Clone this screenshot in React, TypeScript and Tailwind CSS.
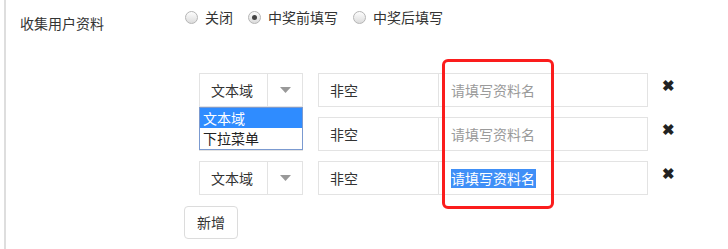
import React from 'react';

const font = { fontFamily: '"Noto Sans CJK SC", "Noto Sans", sans-serif' };

function Radio({ label, checked }: { label: string; checked?: boolean }) {
  return (
    <label className="flex items-center gap-[7px] mr-[15px]">
      <span className="w-[13px] h-[13px] rounded-full border border-[#b5b5b5] bg-gradient-to-b from-[#fdfdfd] to-[#dcdcdc] flex items-center justify-center">
        {checked && <span className="w-[5px] h-[5px] rounded-full bg-[#444]" />}
      </span>
      <span className="text-[14px] text-[#333]">{label}</span>
    </label>
  );
}

function FieldRow({ selected, covered }: { selected?: boolean; covered?: boolean }) {
  return (
    <div className="flex items-start h-[34px]">
      {/* select */}
      <div className="w-[104px] h-[34px] border border-[#e3e3e3] flex">
        <div className="w-[68px] h-full border-r border-[#e3e3e3] flex items-center pl-[11px] text-[14px] text-[#333]">
          {covered ? null : '文本域'}
        </div>
        <div className="flex-1 flex items-center justify-center">
          <svg width="11" height="6" viewBox="0 0 11 6">
            <path d="M0 0 L11 0 L5.5 6 Z" fill="#999" />
          </svg>
        </div>
      </div>
      {/* input group */}
      <div className="ml-[15px] w-[330px] h-[34px] border border-[#e3e3e3] flex">
        <div className="w-[120px] h-full border-r border-[#e3e3e3] flex items-center pl-[11px] text-[14px] text-[#333]">
          非空
        </div>
        <div className="flex-1 flex items-center pl-[12px] text-[14px]">
          {selected ? (
            <span className="bg-[#3f8ff7] text-white leading-[19px] pr-[1px]">请填写资料名</span>
          ) : (
            <span className="text-[#9a9a9a]">请填写资料名</span>
          )}
        </div>
      </div>
      <div className="ml-[14px] mt-[4px] text-[15px] font-bold text-[#222] leading-[15px]">✖</div>
    </div>
  );
}

export default function App() {
  return (
    <div className="w-[728px] h-[249px] bg-white pl-[4px] overflow-hidden" style={font}>
      <div className="relative h-full border-l-2 border-[#dedede]">
        {/* header row */}
        <div className="flex items-start">
          <div className="ml-[14px] mt-[13px] w-[165px] text-[14px] text-[#333]">收集用户资料</div>
          <div className="flex items-center mt-[7px]">
            <Radio label="关闭" />
            <Radio label="中奖前填写" checked />
            <Radio label="中奖后填写" />
          </div>
        </div>

        {/* field rows */}
        <div className="ml-[193px] mt-[39px] flex flex-col gap-[10px]">
          <FieldRow />
          <FieldRow covered />
          <FieldRow selected />
        </div>

        <button className="ml-[178px] mt-[11px] w-[54px] h-[33px] border border-[#dcdcdc] rounded-[4px] text-[14px] text-[#333] bg-white">
          新增
        </button>

        {/* open dropdown list */}
        <div className="absolute left-[193px] top-[107px] w-[104px] h-[43px] border border-[#7b9ad0] bg-white text-[14px]">
          <div className="h-[20px] bg-[#2f8cff] text-white leading-[20px] pl-[3px]">文本域</div>
          <div className="h-[20px] text-[#222] leading-[20px] pl-[3px]">下拉菜单</div>
        </div>

        {/* red highlight */}
        <div className="absolute left-[436px] top-[59px] w-[112px] h-[150px] border-[3px] border-[#fb1d1d] rounded-[6px]" />
      </div>
    </div>
  );
}
